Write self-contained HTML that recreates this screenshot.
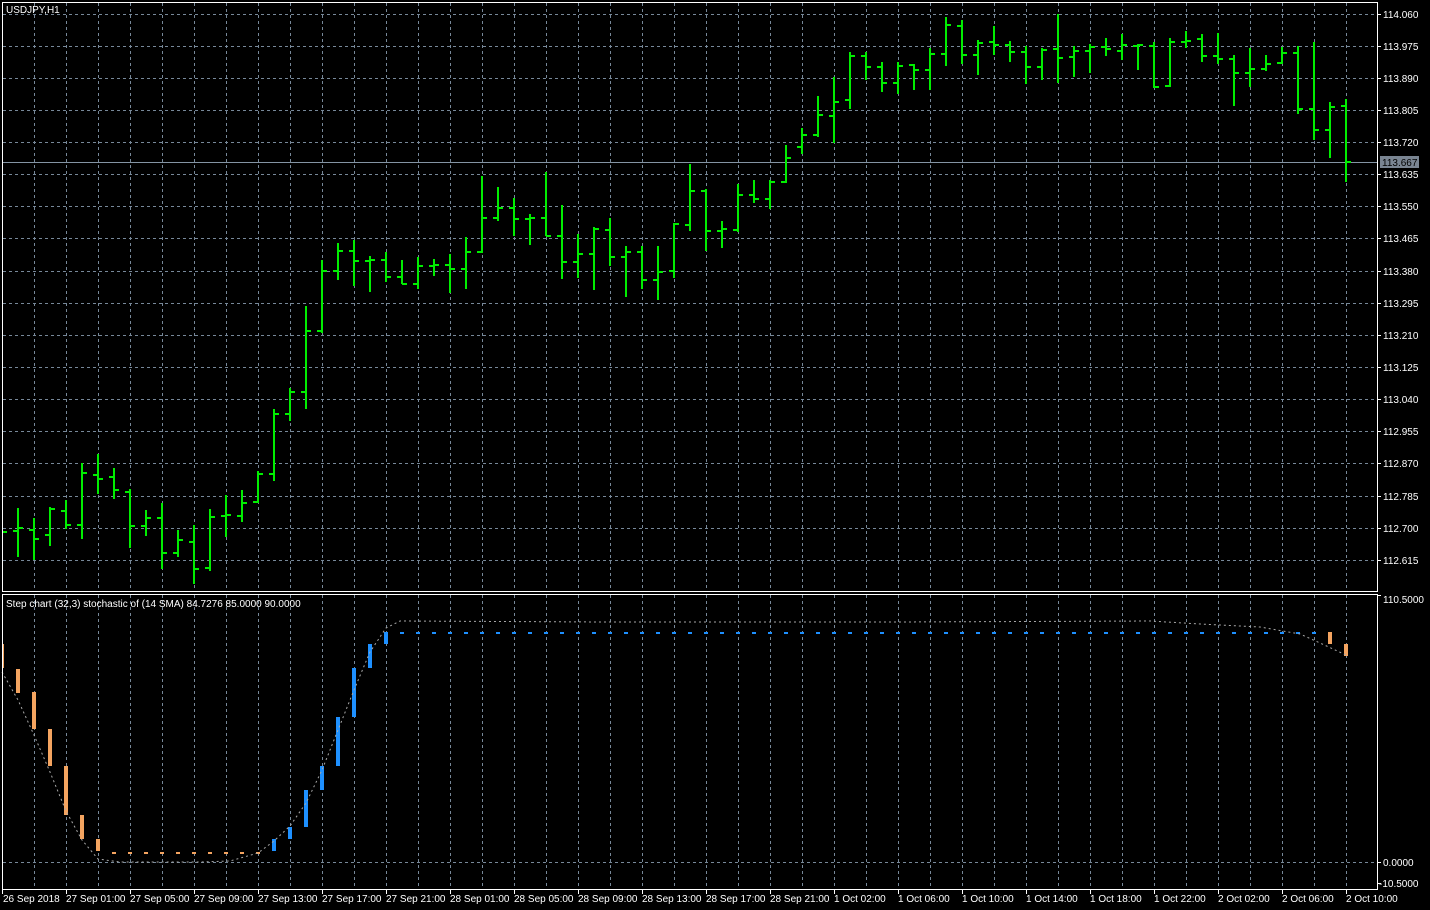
<!DOCTYPE html>
<html><head><meta charset="utf-8"><style>
html,body{margin:0;padding:0;background:#000;width:1430px;height:910px;overflow:hidden}
svg{display:block}
text{font-family:"Liberation Sans",sans-serif;font-size:10px;fill:#fff}
</style></head><body>
<svg width="1430" height="910" viewBox="0 0 1430 910" xmlns="http://www.w3.org/2000/svg">
<rect width="1430" height="910" fill="#000"/>
<!-- grids -->
<g stroke="#778899" stroke-width="1" stroke-dasharray="3,3" fill="none" shape-rendering="crispEdges">
<path d="M34.5,3V591M66.5,3V591M98.5,3V591M130.5,3V591M162.5,3V591M194.5,3V591M226.5,3V591M258.5,3V591M290.5,3V591M322.5,3V591M354.5,3V591M386.5,3V591M418.5,3V591M450.5,3V591M482.5,3V591M514.5,3V591M546.5,3V591M578.5,3V591M610.5,3V591M642.5,3V591M674.5,3V591M706.5,3V591M738.5,3V591M770.5,3V591M802.5,3V591M834.5,3V591M866.5,3V591M898.5,3V591M930.5,3V591M962.5,3V591M994.5,3V591M1026.5,3V591M1058.5,3V591M1090.5,3V591M1122.5,3V591M1154.5,3V591M1186.5,3V591M1218.5,3V591M1250.5,3V591M1282.5,3V591M1314.5,3V591M1346.5,3V591"/>
<path d="M34.5,595V889M66.5,595V889M98.5,595V889M130.5,595V889M162.5,595V889M194.5,595V889M226.5,595V889M258.5,595V889M290.5,595V889M322.5,595V889M354.5,595V889M386.5,595V889M418.5,595V889M450.5,595V889M482.5,595V889M514.5,595V889M546.5,595V889M578.5,595V889M610.5,595V889M642.5,595V889M674.5,595V889M706.5,595V889M738.5,595V889M770.5,595V889M802.5,595V889M834.5,595V889M866.5,595V889M898.5,595V889M930.5,595V889M962.5,595V889M994.5,595V889M1026.5,595V889M1058.5,595V889M1090.5,595V889M1122.5,595V889M1154.5,595V889M1186.5,595V889M1218.5,595V889M1250.5,595V889M1282.5,595V889M1314.5,595V889M1346.5,595V889"/>
<path d="M3,14.5H1377M3,46.5H1377M3,78.5H1377M3,110.5H1377M3,142.5H1377M3,174.5H1377M3,206.5H1377M3,238.5H1377M3,271.5H1377M3,303.5H1377M3,335.5H1377M3,367.5H1377M3,399.5H1377M3,431.5H1377M3,463.5H1377M3,496.5H1377M3,528.5H1377M3,560.5H1377"/>
<path d="M3,862.5H1377"/>
</g>
<!-- current price line -->
<path d="M3,162.5H1377" stroke="#8494a4" stroke-width="1"/>
<!-- bars -->
<path fill="none" stroke="#00ee00" stroke-width="2" d="
M2,532H7
M18,508V557M13,531H18M18,528H23
M34,518V560M29,530H34M34,539H39
M50,507V546M45,535H50M50,509H55
M66,500V529M61,511H66M66,525H71
M82,463V539M77,525H82M82,473H87
M98,454V494M93,475H98M98,479H103
M114,468V499M109,477H114M114,490H119
M130,489V548M125,492H130M130,526H135
M146,510V536M141,526H146M146,518H151
M162,503V569M157,518H162M162,553H167
M178,530V557M173,553H178M178,540H183
M194,525V584M189,542H194M194,569H199
M210,509V571M205,568H210M210,517H215
M226,495V537M221,516H226M226,515H231
M242,490V522M237,516H242M242,503H247
M258,471V503M253,502H258M258,474H263
M274,409V481M269,474H274M274,414H279
M290,388V421M285,414H290M290,392H295
M306,306V409M301,392H306M306,331H311
M322,260V333M317,331H322M322,271H327
M338,243V280M333,271H338M338,251H343
M354,240V286M349,251H354M354,261H359
M370,256V292M365,261H370M370,260H375
M386,252V282M381,260H386M386,277H391
M402,260V284M397,277H402M402,284H407
M418,257V289M413,284H418M418,266H423
M434,259V276M429,266H434M434,265H439
M450,254V293M445,265H450M450,269H455
M466,237V289M461,269H466M466,252H471
M482,176V253M477,252H482M482,218H487
M498,187V221M493,218H498M498,208H503
M514,198V236M509,208H514M514,219H519
M530,214V245M525,219H530M530,218H535
M546,172V236M541,218H546M546,236H551
M562,205V279M557,236H562M562,262H567
M578,234V278M573,262H578M578,254H583
M594,227V290M589,254H594M594,229H599
M610,218V266M605,230H610M610,257H615
M626,246V297M621,257H626M626,252H631
M642,246V289M637,252H642M642,280H647
M658,246V300M653,280H658M658,272H663
M674,223V278M669,271H674M674,224H679
M690,164V231M685,225H690M690,191H695
M706,189V251M701,191H706M706,231H711
M722,221V248M717,231H722M722,229H727
M738,184V232M733,230H738M738,195H743
M754,180V203M749,195H754M754,199H759
M770,180V209M765,199H770M770,182H775
M786,145V183M781,182H786M786,158H791
M802,128V154M797,147H802M802,135H807
M818,96V137M813,135H818M818,115H823
M834,77V143M829,116H834M834,102H839
M850,52V109M845,100H850M850,56H855
M866,52V80M861,56H866M866,67H871
M882,62V92M877,67H882M882,83H887
M898,62V94M893,83H898M898,66H903
M914,64V90M909,65H914M914,70H919
M930,48V90M925,70H930M930,54H935
M946,17V66M941,54H946M946,25H951
M962,20V64M957,26H962M962,55H967
M978,40V75M973,55H978M978,43H983
M994,26V55M989,42H994M994,45H999
M1010,41V62M1005,45H1010M1010,52H1015
M1026,46V84M1021,52H1026M1026,67H1031
M1042,48V80M1037,67H1042M1042,50H1047
M1058,14V83M1053,49H1058M1058,58H1063
M1074,46V77M1069,57H1074M1074,51H1079
M1090,44V73M1085,51H1090M1090,47H1095
M1106,38V56M1101,47H1106M1106,49H1111
M1122,34V60M1117,51H1122M1122,45H1127
M1138,44V70M1133,46H1138M1138,45H1143
M1154,42V88M1149,46H1154M1154,87H1159
M1170,38V87M1165,86H1170M1170,42H1175
M1186,31V48M1181,42H1186M1186,41H1191
M1202,34V62M1197,39H1202M1202,56H1207
M1218,33V64M1213,56H1218M1218,59H1223
M1234,55V106M1229,59H1234M1234,73H1239
M1250,48V87M1245,73H1250M1250,69H1255
M1266,55V71M1261,69H1266M1266,64H1271
M1282,47V64M1277,63H1282M1282,53H1287
M1298,46V114M1293,53H1298M1298,109H1303
M1314,42V140M1309,109H1314M1314,130H1319
M1330,102V158M1325,130H1330M1330,107H1335
M1346,99V182M1341,106H1346M1346,162H1351"/>
<!-- indicator bars -->
<g fill="#f4a460">
<rect x="2" y="644" width="2" height="24"/>
<rect x="16" y="669" width="4" height="24"/>
<rect x="32" y="692" width="4" height="37"/>
<rect x="48" y="729" width="4" height="37"/>
<rect x="64" y="766" width="4" height="49"/>
<rect x="80" y="815" width="4" height="24"/>
<rect x="96" y="839" width="4" height="12"/>
<rect x="112" y="852" width="4" height="2"/><rect x="128" y="852" width="4" height="2"/><rect x="144" y="852" width="4" height="2"/><rect x="160" y="852" width="4" height="2"/><rect x="176" y="852" width="4" height="2"/><rect x="192" y="852" width="4" height="2"/><rect x="208" y="852" width="4" height="2"/><rect x="224" y="852" width="4" height="2"/><rect x="240" y="852" width="4" height="2"/><rect x="256" y="852" width="4" height="2"/>
<rect x="1328" y="632" width="4" height="12"/>
<rect x="1344" y="644" width="4" height="12"/>
</g>
<g fill="#1e90ff">
<rect x="272" y="839" width="4" height="12"/>
<rect x="288" y="827" width="4" height="12"/>
<rect x="304" y="790" width="4" height="37"/>
<rect x="320" y="766" width="4" height="24"/>
<rect x="336" y="717" width="4" height="49"/>
<rect x="352" y="668" width="4" height="49"/>
<rect x="368" y="644" width="4" height="24"/>
<rect x="384" y="632" width="4" height="12"/>
<path d="M400,633H404M416,633H420M432,633H436M448,633H452M464,633H468M480,633H484M496,633H500M512,633H516M528,633H532M544,633H548M560,633H564M576,633H580M592,633H596M608,633H612M624,633H628M640,633H644M656,633H660M672,633H676M688,633H692M704,633H708M720,633H724M736,633H740M752,633H756M768,633H772M784,633H788M800,633H804M816,633H820M832,633H836M848,633H852M864,633H868M880,633H884M896,633H900M912,633H916M928,633H932M944,633H948M960,633H964M976,633H980M992,633H996M1008,633H1012M1024,633H1028M1040,633H1044M1056,633H1060M1072,633H1076M1088,633H1092M1104,633H1108M1120,633H1124M1136,633H1140M1152,633H1156M1168,633H1172M1184,633H1188M1200,633H1204M1216,633H1220M1232,633H1236M1248,633H1252M1264,633H1268M1280,633H1284M1296,633H1300M1312,633H1316" stroke="#1e90ff" stroke-width="2"/>
</g>
<!-- signal dotted -->
<polyline fill="none" stroke="#a8a8a8" stroke-width="1" stroke-dasharray="2,3" points="2,672 18,700 34,735 50,772 66,811 82,840 98,859 120,862 200,862 230,861 258,853 274,841 290,826 306,803 322,770 338,730 354,690 370,652 386,628 400,621 600,622 900,622 1150,621 1200,624 1260,627 1300,634 1320,643 1346,655"/>
<!-- frames -->
<g fill="none" stroke="#fff" stroke-width="1" shape-rendering="crispEdges">
<path d="M2.5,2.5H1377.5V591.5H2.5Z"/>
<path d="M2.5,594.5H1377.5V889.5H2.5Z"/>
</g>
<!-- axis ticks -->
<path stroke="#fff" stroke-width="1" shape-rendering="crispEdges" d="M1377,14.5H1381M1377,46.5H1381M1377,78.5H1381M1377,110.5H1381M1377,142.5H1381M1377,174.5H1381M1377,206.5H1381M1377,238.5H1381M1377,271.5H1381M1377,303.5H1381M1377,335.5H1381M1377,367.5H1381M1377,399.5H1381M1377,431.5H1381M1377,463.5H1381M1377,496.5H1381M1377,528.5H1381M1377,560.5H1381M1377,595.5H1381M1377,862.5H1381M1377,883.5H1381
M2.5,889V894M66.5,889V894M130.5,889V894M194.5,889V894M258.5,889V894M322.5,889V894M386.5,889V894M450.5,889V894M514.5,889V894M578.5,889V894M642.5,889V894M706.5,889V894M770.5,889V894M834.5,889V894M898.5,889V894M962.5,889V894M1026.5,889V894M1090.5,889V894M1154.5,889V894M1218.5,889V894M1282.5,889V894M1346.5,889V894"/>
<!-- price labels -->
<g>
<text x="1383" y="18">114.060</text>
<text x="1383" y="50">113.975</text>
<text x="1383" y="82">113.890</text>
<text x="1383" y="114">113.805</text>
<text x="1383" y="146">113.720</text>
<text x="1383" y="178">113.635</text>
<text x="1383" y="210">113.550</text>
<text x="1383" y="242">113.465</text>
<text x="1383" y="275">113.380</text>
<text x="1383" y="307">113.295</text>
<text x="1383" y="339">113.210</text>
<text x="1383" y="371">113.125</text>
<text x="1383" y="403">113.040</text>
<text x="1383" y="435">112.955</text>
<text x="1383" y="467">112.870</text>
<text x="1383" y="500">112.785</text>
<text x="1383" y="532">112.700</text>
<text x="1383" y="564">112.615</text>
</g>
<rect x="1380" y="156" width="39" height="12" fill="#7a8592"/>
<text x="1382" y="166" style="fill:#000">113.667</text>
<text x="1383" y="603">110.5000</text>
<text x="1383" y="866">0.0000</text>
<text x="1379" y="887">-10.5000</text>
<text x="6" y="13">USDJPY,H1</text>
<text x="6" y="607">Step chart (32,3) stochastic of (14 SMA) 84.7276 85.0000 90.0000</text>
<!-- time labels -->
<g>
<text x="3" y="902">26 Sep 2018</text>
<text x="66" y="902">27 Sep 01:00</text>
<text x="130" y="902">27 Sep 05:00</text>
<text x="194" y="902">27 Sep 09:00</text>
<text x="258" y="902">27 Sep 13:00</text>
<text x="322" y="902">27 Sep 17:00</text>
<text x="386" y="902">27 Sep 21:00</text>
<text x="450" y="902">28 Sep 01:00</text>
<text x="514" y="902">28 Sep 05:00</text>
<text x="578" y="902">28 Sep 09:00</text>
<text x="642" y="902">28 Sep 13:00</text>
<text x="706" y="902">28 Sep 17:00</text>
<text x="770" y="902">28 Sep 21:00</text>
<text x="834" y="902">1 Oct 02:00</text>
<text x="898" y="902">1 Oct 06:00</text>
<text x="962" y="902">1 Oct 10:00</text>
<text x="1026" y="902">1 Oct 14:00</text>
<text x="1090" y="902">1 Oct 18:00</text>
<text x="1154" y="902">1 Oct 22:00</text>
<text x="1218" y="902">2 Oct 02:00</text>
<text x="1282" y="902">2 Oct 06:00</text>
<text x="1346" y="902">2 Oct 10:00</text>
</g>
</svg>
</body></html>
